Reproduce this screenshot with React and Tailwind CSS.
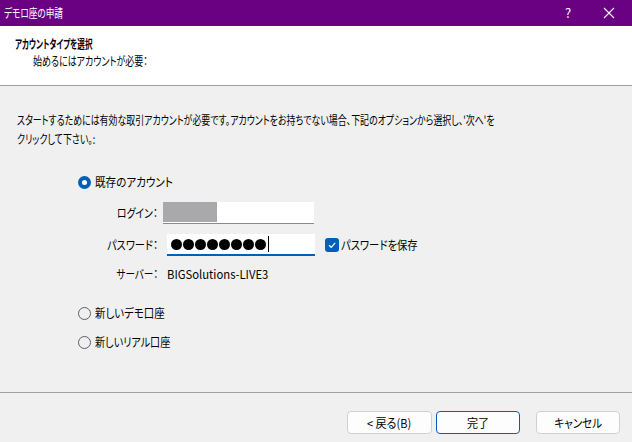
import React from "react";

const font = { fontFamily: '"Noto Sans CJK JP", "Noto Sans", sans-serif' };

function Radio({ checked, label, cls }) {
  return (
    <div className="flex items-center h-[20px]">
      <div className={`w-[13px] h-[13px] rounded-full flex items-center justify-center shrink-0 ${checked ? "bg-[#005fb8]" : "border border-[#5f5f5f] bg-[#f0f0f0]"}`}>
        {checked && <div className="w-[5px] h-[5px] rounded-full bg-white" />}
      </div>
      <span className={`ml-[4px] inline-block whitespace-nowrap origin-left ${cls}`}>{label}</span>
    </div>
  );
}

export default function App() {
  return (
    <div className="w-[632px] h-[442px] bg-[#f0f0f0] text-[12px] text-black flex flex-col overflow-hidden [font-feature-settings:'palt']" style={font}>
      <div className="h-[26px] bg-[#6a0082] text-white flex items-center pl-[4px]">
        <div className="flex-1">
          <span className="inline-block whitespace-nowrap origin-left scale-x-[0.72]">デモロ座の申請</span>
        </div>
        <span className="w-[14px] text-center text-[13px] mr-[28px]">?</span>
        <svg width="12" height="12" viewBox="0 0 12 12" className="mr-[17px]">
          <path d="M1 1L11 11M11 1L1 11" stroke="white" strokeWidth="1.1" />
        </svg>
      </div>
      <div className="h-[59px] bg-white pt-[9px] pl-[15px] leading-[17px]">
        <div><span className="inline-block whitespace-nowrap origin-left scale-x-[0.63] font-bold">アカウントタイプを選択</span></div>
        <div className="pl-[18px]"><span className="inline-block whitespace-nowrap origin-left scale-x-[0.75]">始めるにはアカウントが必要：</span></div>
      </div>
      <div className="h-[1px] bg-[#a0a0a0]" />
      <div className="flex-1 flex flex-col">
        <div className="pl-[17px] pt-[24px] leading-[19px]">
          <div className="whitespace-nowrap origin-left scale-x-[0.745] w-[600px]">
            スタートするためには有効な取引アカウントが必要です。アカウントをお持ちでない場合、下記のオプションから選択し、'次へ'を<br />クリックして下さい。:
          </div>
        </div>
        <div className="pl-[78px] pt-[24px]">
          <Radio checked label="既存のアカウント" cls="scale-x-[0.88]" />
          <div className="flex items-center mt-[10px] h-[22px]">
            <div className="w-[85px] pr-[5px] flex justify-end">
              <span className="inline-block whitespace-nowrap origin-right scale-x-[0.82]">ログイン：</span>
            </div>
            <div className="w-[151px] h-[22px] bg-white border-b border-[#8a8a8a] flex">
              <div className="w-[54px] h-[20px] bg-[#a9a9ab]" />
            </div>
          </div>
          <div className="flex items-center mt-[10px] h-[22px]">
            <div className="w-[89px] pr-[9px] flex justify-end">
              <span className="inline-block whitespace-nowrap origin-right scale-x-[0.85]">パスワード：</span>
            </div>
            <div className="w-[148px] h-[22px] bg-white border-b-2 border-[#005fb8] flex items-center pl-[4px] gap-[1px]">
              {[0, 1, 2, 3, 4, 5, 6, 7].map((i) => (
                <div key={i} className="w-[11px] h-[11px] rounded-full bg-black" />
              ))}
              <div className="w-[1px] h-[16px] bg-black ml-[1px]" />
            </div>
            <div className="ml-[10px] w-[14px] h-[14px] rounded-[3px] bg-[#005fb8] flex items-center justify-center shrink-0">
              <svg width="10" height="10" viewBox="0 0 10 10">
                <path d="M2 5.2L4.2 7.3L8.2 2.8" stroke="white" strokeWidth="1.2" fill="none" />
              </svg>
            </div>
            <span className="ml-[2px] inline-block whitespace-nowrap origin-left scale-x-[0.86]">パスワードを保存</span>
          </div>
          <div className="flex items-center mt-[8px] h-[20px]">
            <div className="w-[89px] pr-[9px] flex justify-end">
              <span className="inline-block whitespace-nowrap origin-right scale-x-[0.8]">サーバー：</span>
            </div>
            <span className="inline-block whitespace-nowrap origin-left scale-x-[0.94]">BIGSolutions-LIVE3</span>
          </div>
          <div className="mt-[19px]">
            <Radio label="新しいデモ口座" cls="scale-x-[0.87]" />
          </div>
          <div className="mt-[9px]">
            <Radio label="新しいリアル口座" cls="scale-x-[0.84]" />
          </div>
        </div>
      </div>
      <div className="h-[1px] bg-[#a0a0a0]" />
      <div className="h-[49px] flex items-start pt-[18px] pl-[347px]">
        <button className="w-[85px] h-[23px] bg-[#fdfdfd] border border-[#d0d0d0] rounded-[4px] flex items-center justify-center">
          <span className="inline-block whitespace-nowrap scale-x-[0.92]">&lt; 戻る(B)</span>
        </button>
        <button className="ml-[4px] w-[84px] h-[23px] bg-[#fdfdfd] border border-[#005fb8] rounded-[4px] flex items-center justify-center">
          <span className="inline-block whitespace-nowrap scale-x-[0.92]">完了</span>
        </button>
        <button className="ml-[16px] w-[84px] h-[23px] bg-[#fdfdfd] border border-[#d0d0d0] rounded-[4px] flex items-center justify-center">
          <span className="inline-block whitespace-nowrap scale-x-[0.88]">キャンセル</span>
        </button>
      </div>
    </div>
  );
}
